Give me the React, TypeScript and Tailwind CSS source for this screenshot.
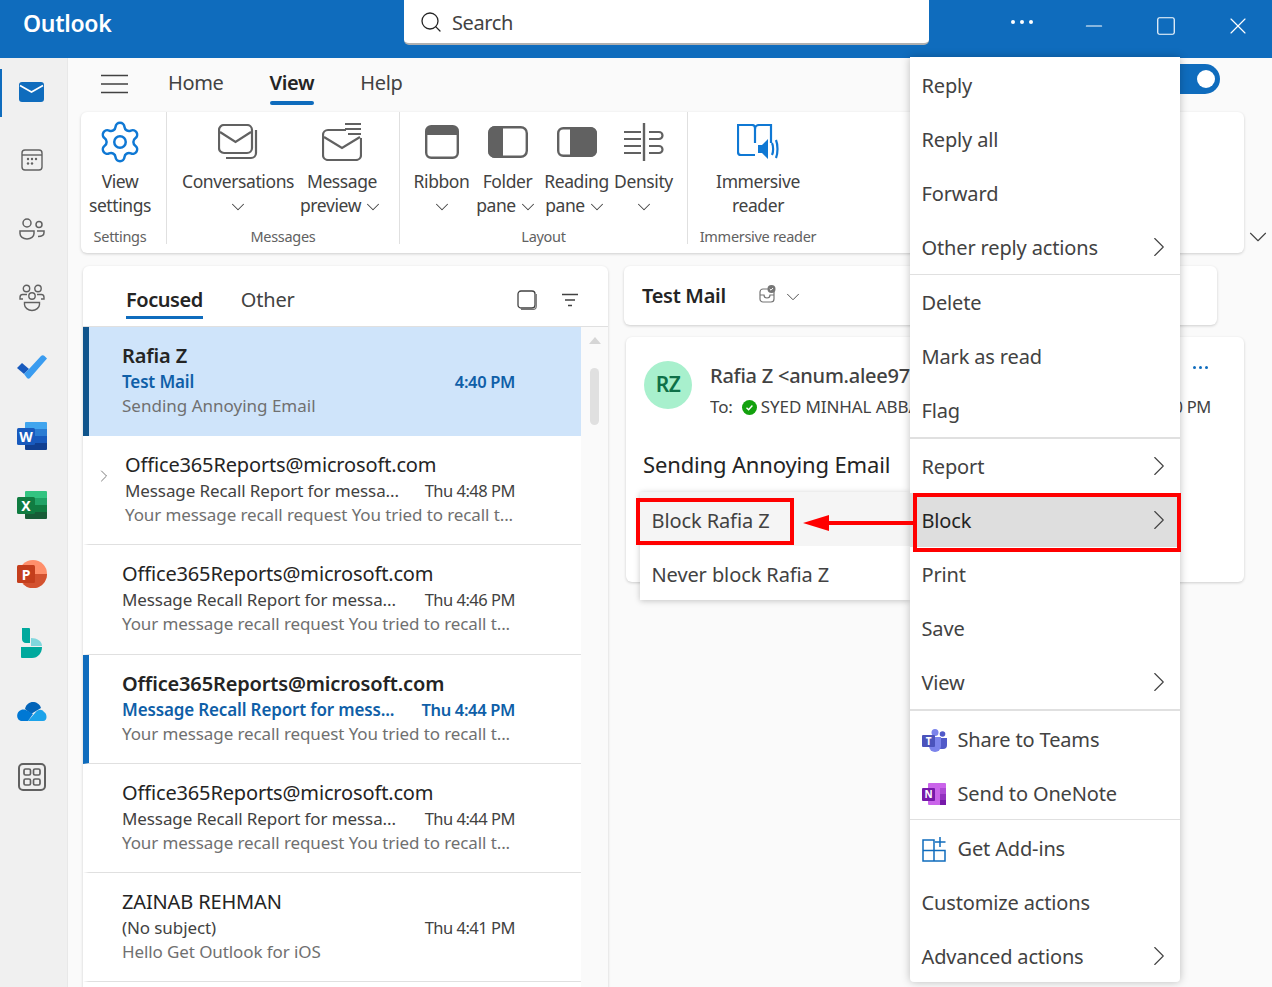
import type { ReactNode } from "react";
import { ChevronDown, ChevronRight, Search, Settings, X, Minus, Square } from "lucide-react";

const font = { fontFamily: '"Noto Sans", sans-serif' };

function RailIcon({ children, active, h = "h-[69px]" }: { children: ReactNode; active?: boolean; h?: string }) {
  return (
    <div className={h + " flex items-center justify-center"}>
      {active && <div className="absolute left-0 top-[69px] h-[48px] w-[2px] bg-[#0f6cbd]" />}
      {children}
    </div>
  );
}

function OfficeTile({ a, b, c, d, tile, letter }: { a: string; b: string; c: string; d: string; tile: string; letter: string }) {
  return (
    <svg width="30" height="28" viewBox="0 0 30 28">
      <path d="M8 1a1 1 0 0 1 1-1h20a1 1 0 0 1 1 1v6H8z" fill={a} />
      <rect x="8" y="7" width="22" height="7" fill={b} />
      <rect x="8" y="14" width="22" height="7" fill={c} />
      <path d="M8 21h22v6a1 1 0 0 1-1 1H9a1 1 0 0 1-1-1z" fill={d} />
      <rect y="6" width="18" height="17" rx="1.5" fill={tile} />
      <text x="9" y="19.5" textAnchor="middle" fontSize="14" fontWeight="700" fill="#fff" fontFamily="Noto Sans">{letter}</text>
    </svg>
  );
}

function Rail() {
  return (
    <div className="w-[68px] shrink-0 bg-[#f0f0f0] border-r border-[#e8e8e8] pr-[3px]">
      <RailIcon active h="h-[67px]">
        <svg width="26" height="20" viewBox="0 0 26 20"><rect width="25" height="20" rx="3" fill="#0f6cbd" /><path d="M1 3.5l11.5 6.5 11.5-6.5" fill="none" stroke="#fff" strokeWidth="1.6" /></svg>
      </RailIcon>
      <RailIcon>
        <svg width="22" height="22" viewBox="0 0 22 22" fill="none" stroke="#616161" strokeWidth="1.4"><rect x="1" y="1" width="20" height="20" rx="3" /><path d="M1 6h20" /><g fill="#616161" stroke="none"><circle cx="7" cy="10" r="1.2" /><circle cx="11" cy="10" r="1.2" /><circle cx="15" cy="10" r="1.2" /><circle cx="7" cy="14.5" r="1.2" /><circle cx="11" cy="14.5" r="1.2" /></g></svg>
      </RailIcon>
      <RailIcon>
        <svg width="28" height="22" viewBox="0 0 28 22" fill="none" stroke="#616161" strokeWidth="1.5"><circle cx="9" cy="5" r="4" /><circle cx="21" cy="6.5" r="3" /><path d="M2 13h14v2.5c0 3-3 5.5-7 5.5s-7-2.5-7-5.5z" /><path d="M19 13h7v1.5c0 2.5-2.5 4-6 4" /></svg>
      </RailIcon>
      <RailIcon>
        <svg width="28" height="28" viewBox="0 0 28 28" fill="none" stroke="#616161" strokeWidth="1.4"><circle cx="8.5" cy="4.5" r="3.2" /><circle cx="20" cy="4.5" r="3.2" /><circle cx="14" cy="12" r="3.2" /><path d="M5 15H2v-1.5C2 12 3 10.5 4.5 10.5H9" /><path d="M23 15h3v-1.5c0-1.5-1-3-2.5-3H19" /><path d="M6.5 18.5h15v2c0 3-3.5 6-7.5 6s-7.5-3-7.5-6z" /></svg>
      </RailIcon>
      <RailIcon>
        <svg width="30" height="24" viewBox="0 0 30 24"><path d="M0 13l5-5 7 6-5 5z" fill="#185abd" /><path d="M7 19l5-5L24 1c1-1 2.5-1 3.5 0L30 3.5 13 23c-1 1-2 1-3 0z" fill="#3a9cf0" /></svg>
      </RailIcon>
      <RailIcon>
        <OfficeTile a="#41a5ee" b="#2b7cd3" c="#185abd" d="#103f91" tile="#185abd" letter="W" />
      </RailIcon>
      <RailIcon>
        <OfficeTile a="#33c481" b="#21a366" c="#107c41" d="#185c37" tile="#107c41" letter="X" />
      </RailIcon>
      <RailIcon>
        <svg width="30" height="28" viewBox="0 0 30 28"><circle cx="16" cy="14" r="14" fill="#ff8f6b" /><path d="M16 14h14a14 14 0 0 1-24 10z" fill="#d35230" /><rect y="5" width="18" height="18" rx="1.5" fill="#c43e1c" /><text x="9" y="19.5" textAnchor="middle" fontSize="14" fontWeight="700" fill="#fff" fontFamily="Noto Sans">P</text></svg>
      </RailIcon>
      <RailIcon>
        <svg width="22" height="30" viewBox="0 0 22 30"><path d="M1 0h7a1 1 0 0 1 1 1v14H5C2.5 15 1 13 1 11z" fill="#00a99d" /><path d="M10 10c6 0 11 3 11 8h-11z" fill="#37c6d0" opacity=".6" /><path d="M0 19h21c0 6-4 11-10 11H1a1 1 0 0 1-1-1z" fill="#00a99d" /></svg>
      </RailIcon>
      <RailIcon>
        <svg width="30" height="19" viewBox="0 0 30 19"><path d="M8 7c2-9 13-9 16-1l-10 6z" fill="#0364b8" /><path d="M11 19H5c-6 0-6.5-9-1-11 3-1 5 0 7 1l5 3z" fill="#0078d4" /><path d="M11 19l7-8c3-4 7-4 9-1 3 1 4 9-1 9z" fill="#1ca3ea" /></svg>
      </RailIcon>
      <RailIcon h="h-[61px]">
        <svg width="28" height="28" viewBox="0 0 28 28" fill="none" stroke="#616161"><rect x="1" y="1" width="26" height="26" rx="4" strokeWidth="2" /><g strokeWidth="1.7"><rect x="6" y="6" width="6.5" height="6" rx="1.5" /><rect x="15.5" y="6" width="6.5" height="6" rx="1.5" /><rect x="6" y="16" width="6.5" height="6" rx="1.5" /><rect x="15.5" y="16" width="6.5" height="6" rx="1.5" /></g></svg>
      </RailIcon>
    </div>
  );
}

function RibbonButton({ icon, lines, chevron, w }: { icon: ReactNode; lines: string[]; chevron?: boolean; w: string }) {
  return (
    <div className={w + " flex flex-col items-center shrink-0"}>
      <div className="h-[50px] flex items-center justify-center">{icon}</div>
      <div className="text-[17.5px] leading-[24px] text-[#424242] whitespace-nowrap text-center mt-[2px] tracking-[-0.4px]">
        <div>{lines[0]}</div>
        <div className="h-[24px] flex items-center justify-center gap-[1px]">
          {lines[1] && <span>{lines[1]}</span>}
          {chevron && <ChevronDown className="mt-[4px]" size={22} strokeWidth={1.1} />}
        </div>
      </div>
    </div>
  );
}

function RibbonGroup({ label, w, pad = "", border, children }: { label: string; w: string; pad?: string; border?: boolean; children: ReactNode }) {
  return (
    <div className={w + " shrink-0 h-[132px] flex flex-col" + (border ? " border-r border-[#e0e0e0]" : "")}>
      <div className={"flex justify-center h-[114px] shrink-0 pt-[5px] " + pad}>{children}</div>
      <div className={"text-[14.5px] leading-[20px] shrink-0 text-[#616161] text-center whitespace-nowrap tracking-[-0.3px] " + (pad === "pr-[7px]" ? pad : "")}>{label}</div>
    </div>
  );
}

function Ribbon() {
  const stroke = "#616161";
  return (
    <div className="ml-[13px] w-[1163px] shrink-0 h-[141px] bg-white rounded-[6px] shadow-[0_1px_3px_rgba(0,0,0,0.18)] flex">
      <RibbonGroup label="Settings" w="w-[86px]" pad="pr-[7px]" border>
        <RibbonButton w="w-[78px]" lines={["View", "settings"]} icon={<Settings size={46} strokeWidth={1.3} color="#0f78d4" />} />
      </RibbonGroup>
      <RibbonGroup label="Messages" w="w-[233px]" pad="pl-[6px]" border>
        <RibbonButton w="w-[112px]" lines={["Conversations", ""]} chevron icon={
          <svg width="40" height="36" viewBox="0 0 40 36" fill="none" stroke={stroke} strokeWidth="2.2"><rect x="1" y="1" width="33" height="28" rx="5" /><path d="M2 8l15.5 10L33 8" /><path d="M38 6v23a5 5 0 0 1-5 5H8" /></svg>
        } />
        <RibbonButton w="w-[96px]" lines={["Message", "preview"]} chevron icon={
          <svg width="40" height="38" viewBox="0 0 40 38" fill="none" stroke={stroke} strokeWidth="2.2"><path d="M24 7H6a5 5 0 0 0-5 5v20a5 5 0 0 0 5 5h28a5 5 0 0 0 5-5V15" /><path d="M2 14l18 11 18-11" /><path d="M23 1h16M23 6h16M26 11h13" /></svg>
        } />
      </RibbonGroup>
      <RibbonGroup label="Layout" w="w-[288px]" border>
        <RibbonButton w="w-[62px]" lines={["Ribbon", ""]} chevron icon={
          <svg width="34" height="34" viewBox="0 0 34 34"><rect x="1.2" y="1.2" width="31.6" height="31.6" rx="5" fill="none" stroke={stroke} strokeWidth="2.4" /><path d="M1 10V6a5 5 0 0 1 5-5h22a5 5 0 0 1 5 5v4z" fill={stroke} /></svg>
        } />
        <RibbonButton w="w-[70px]" lines={["Folder", "pane"]} chevron icon={
          <svg width="40" height="32" viewBox="0 0 40 32"><rect x="1.2" y="1.2" width="37.6" height="29.6" rx="6" fill="none" stroke={stroke} strokeWidth="2.4" /><path d="M15 0H7a7 7 0 0 0-7 7v18a7 7 0 0 0 7 7h8z" fill={stroke} /></svg>
        } />
        <RibbonButton w="w-[68px]" lines={["Reading", "pane"]} chevron icon={
          <svg width="40" height="30" viewBox="0 0 40 30"><rect x="1.2" y="1.2" width="37.6" height="27.6" rx="5" fill="none" stroke={stroke} strokeWidth="2.4" /><path d="M13 0h20a7 7 0 0 1 7 7v16a7 7 0 0 1-7 7H13z" fill={stroke} /></svg>
        } />
        <RibbonButton w="w-[66px]" lines={["Density", ""]} chevron icon={
          <svg width="40" height="38" viewBox="0 0 40 38" fill="none" stroke={stroke} strokeWidth="2.2"><path d="M20 0v38" strokeWidth="2.4" /><path d="M0 9h17M0 16h17M0 23h17M0 30h17" /><path d="M25 9h10a3.5 3.5 0 0 1 0 7h-10" /><path d="M25 23h10a3.5 3.5 0 0 1 0 7h-10" /></svg>
        } />
      </RibbonGroup>
      <RibbonGroup label="Immersive reader" w="w-[140px]">
        <RibbonButton w="w-[130px]" lines={["Immersive", "reader"]} icon={
          <svg width="42" height="36" viewBox="0 0 42 36" fill="none" stroke="#0f78d4" strokeWidth="2.2"><path d="M18 31H4a3 3 0 0 1-3-3V1h14a3 3 0 0 1 3 3v15" /><path d="M18 5c0-2.5 2-4 4-4h12v18" /><path d="M21 21h4l6-6v20l-6-6h-4z" fill="#0f78d4" stroke="none" /><path d="M35 19c1.5 3 1.5 9 0 12M39 16c2 5 2 13 0 18" /></svg>
        } />
      </RibbonGroup>
    </div>
  );
}

type Mail = { from: string; subject: string; time: string; preview: string };

const mails: Mail[] = [
  { from: "Rafia Z", subject: "Test Mail", time: "4:40 PM", preview: "Sending Annoying Email" },
  { from: "Office365Reports@microsoft.com", subject: "Message Recall Report for messa...", time: "Thu 4:48 PM", preview: "Your message recall request You tried to recall t..." },
  { from: "Office365Reports@microsoft.com", subject: "Message Recall Report for messa...", time: "Thu 4:46 PM", preview: "Your message recall request You tried to recall t..." },
  { from: "Office365Reports@microsoft.com", subject: "Message Recall Report for mess...", time: "Thu 4:44 PM", preview: "Your message recall request You tried to recall t..." },
  { from: "Office365Reports@microsoft.com", subject: "Message Recall Report for messa...", time: "Thu 4:44 PM", preview: "Your message recall request You tried to recall t..." },
  { from: "ZAINAB REHMAN", subject: "(No subject)", time: "Thu 4:41 PM", preview: "Hello Get Outlook for iOS" },
];

function MailRow({ mail, index }: { mail: Mail; index: number }) {
  const selected = index === 0;
  const unread = index === 3;
  const rowClass = selected
    ? "bg-[#cfe4fa] border-l-[#0f548c]"
    : unread
      ? "bg-white border-l-[#0f6cbd] border-b border-b-[#e0e0e0]"
      : "bg-white border-l-transparent border-b border-b-[#e0e0e0]";
  return (
    <div className={"h-[109.2px] flex border-l-[6px] pr-[66px] " + rowClass}>
      <div className={index === 1 ? "w-[36px] shrink-0 pl-[5px] pt-[30px]" : "w-[33px] shrink-0"}>
        {index === 1 && <ChevronRight size={20} strokeWidth={1} color="#616161" />}
      </div>
      <div className="flex-1 min-w-0 pt-[16px]">
        <div className={"h-[26px] leading-[26px] text-[20px] text-[#242424] whitespace-nowrap " + (unread || selected ? "font-semibold tracking-[-0.15px]" : "tracking-[-0.15px]")}>{mail.from}</div>
        <div className="h-[26px] leading-[26px] flex justify-between text-[17px] whitespace-nowrap tracking-[-0.1px]">
          <span className={selected || unread ? "font-semibold text-[#0f5fa8] tracking-[-0.15px]" : "text-[#424242]"}>{mail.subject}</span>
          <span className={selected || unread ? "text-[16.5px] tracking-[-0.35px] font-semibold text-[#0f5fa8]" : "text-[16.5px] tracking-[-0.5px] text-[#424242]"}>{mail.time}</span>
        </div>
        <div className={"h-[22px] leading-[22px] text-[17px] text-[#707070] whitespace-nowrap " + (selected ? "tracking-[0px]" : "tracking-[-0.1px]")}>{mail.preview}</div>
      </div>
    </div>
  );
}

function MailList() {
  return (
    <div className="ml-[2px] w-[525px] shrink-0 h-[760px] bg-white rounded-t-[6px] shadow-[0_1px_3px_rgba(0,0,0,0.18)] overflow-hidden flex flex-col">
      <div className="h-[61px] shrink-0 flex items-start border-b border-[#e0e0e0] pl-[43px] pr-[29px]">
        <div className="mt-[20px] text-[20px] leading-[28px] font-semibold text-[#242424] border-b-[3px] border-[#0f6cbd] h-[33px] tracking-[-0.45px]">Focused</div>
        <div className="mt-[20px] ml-[38px] text-[20px] leading-[28px] text-[#424242] tracking-[-0.2px]">Other</div>
        <div className="ml-auto mt-[24px] flex items-center gap-[23px]">
          <svg width="21" height="20" viewBox="0 0 21 20" fill="none" stroke="#424242"><rect x="1" y="1" width="17" height="17" rx="3" strokeWidth="1.3" /><path d="M19.3 4v12a3.5 3.5 0 0 1-3.5 3.5H4" stroke="#757575" strokeWidth="1.2" /></svg>
          <svg width="18" height="14" viewBox="0 0 18 14" fill="none" stroke="#424242" strokeWidth="1.3"><path d="M1 1.5h16M4 7h10M7 12.5h4" /></svg>
        </div>
      </div>
      <div className="flex flex-1 min-h-0">
        <div className="flex-1 min-w-0">
          {mails.map((m, i) => (
            <MailRow key={i} mail={m} index={i} />
          ))}
        </div>
        <div className="w-[27px] shrink-0 bg-[#fafafa] flex flex-col items-center pt-[10px]">
          <div className="w-0 h-0 border-x-[6px] border-x-transparent border-b-[7px] border-b-[#d6d6d6]" />
          <div className="w-[9px] h-[57px] rounded-full bg-[#e0e0e0] mt-[24px]" />
          <div className="mt-auto mb-[4px] w-0 h-0 border-x-[6px] border-x-transparent border-t-[7px] border-t-[#d6d6d6]" />
        </div>
      </div>
    </div>
  );
}

function ReadingPane() {
  return (
    <div className="ml-[16px] w-[621px] shrink-0 flex flex-col">
      <div className="w-[593px] h-[59px] bg-white rounded-[6px] shadow-[0_1px_3px_rgba(0,0,0,0.18)] flex items-center pl-[18px]">
        <span className="text-[20px] font-semibold text-[#242424] tracking-[-0.3px]">Test Mail</span>
        <svg className="ml-[33px] mb-[3px]" width="17" height="18" viewBox="0 0 17 18" fill="none" stroke="#757575" strokeWidth="1.2"><rect x="1" y="4" width="14" height="13" rx="3" /><path d="M1 10h4a3 3 0 0 0 6 0h4" /><circle cx="12.5" cy="4" r="4" fill="#757575" stroke="none" /><path d="M10.8 4l1.2 1.2 2-2.2" stroke="#fff" strokeWidth="1" /></svg>
        <ChevronDown className="ml-[6px] mt-[2px]" size={22} strokeWidth={1} color="#424242" />
      </div>
      <div className="ml-[2px] mt-[12px] w-[618px] h-[245px] bg-white rounded-[6px] shadow-[0_1px_3px_rgba(0,0,0,0.18)] pt-[24px] pl-[18px]">
        <div className="flex items-start">
          <div className="w-[48px] h-[48px] shrink-0 rounded-full bg-[#a8f0cd] flex items-center justify-center text-[21px] font-semibold text-[#0e7048] tracking-[-0.5px]">RZ</div>
          <div className="ml-[18px] w-[200px] shrink-0 overflow-hidden">
            <div className="h-[30px] leading-[30px] text-[20px] font-medium text-[#424242] whitespace-nowrap tracking-[-0.25px]">{"Rafia Z <anum.alee97"}</div>
            <div className="flex items-center h-[32px] text-[17px] text-[#424242] whitespace-nowrap tracking-[-0.1px]">
              <span className="shrink-0">To:</span>
              <svg className="ml-[9px] mr-[4px] shrink-0" width="15" height="15" viewBox="0 0 15 15"><circle cx="7.5" cy="7.5" r="7.5" fill="#13a10e" /><path d="M4.5 7.8l2.1 2 3.8-4.3" fill="none" stroke="#fff" strokeWidth="1.4" /></svg>
              <span className="shrink-0">SYED MINHAL ABBAS</span>
            </div>
          </div>
          <div className="ml-auto mr-[33px] flex flex-col items-end">
            <div className="h-[12px] flex gap-[3px] mr-[3px] items-center">
              <span className="w-[3px] h-[3px] rounded-full bg-[#0f6cbd]" /><span className="w-[3px] h-[3px] rounded-full bg-[#0f6cbd]" /><span className="w-[3px] h-[3px] rounded-full bg-[#0f6cbd]" />
            </div>
            <div className="mt-[23px] w-[31px] overflow-hidden flex justify-end text-[16.5px] leading-[22px] text-[#424242] whitespace-nowrap tracking-[-0.3px]">
              <span className="shrink-0">4:40 PM</span>
            </div>
          </div>
        </div>
        <div className="mt-[26px] ml-[-1px] text-[22px] leading-[30px] text-[#242424] tracking-[-0.15px]">Sending Annoying Email</div>
      </div>
    </div>
  );
}

type Item = { label: string; arrow?: boolean; icon?: ReactNode; active?: boolean };

function MenuItem({ item }: { item: Item }) {
  return (
    <div className={"h-[54px] flex items-center pl-[11.5px] pr-[4px] text-[20px] whitespace-nowrap tracking-[-0.15px] pt-[2px] " + (item.active ? "bg-[#dedede] text-[#242424]" : "text-[#424242]")}>
      {item.icon && <span className="w-[36px] shrink-0 flex items-center">{item.icon}</span>}
      <span>{item.label}</span>
      {item.arrow && <ChevronRight className="ml-auto -mt-[3px]" size={34} strokeWidth={0.8} color="#424242" />}
    </div>
  );
}

const sections: { items: Item[]; cls: string }[] = [
  { cls: "border-b", items: [{ label: "Reply" }, { label: "Reply all" }, { label: "Forward" }, { label: "Other reply actions", arrow: true }] },
  { cls: "border-b-2", items: [{ label: "Delete" }, { label: "Mark as read" }, { label: "Flag" }] },
  { cls: "border-b-2", items: [{ label: "Report", arrow: true }, { label: "Block", arrow: true, active: true }, { label: "Print" }, { label: "Save" }, { label: "View", arrow: true }] },
  {
    cls: "h-[109px] pt-[1px] border-b",
    items: [
      {
        label: "Share to Teams",
        icon: (
          <svg width="25" height="23" viewBox="0 0 25 23">
            <circle cx="20.5" cy="5" r="2.8" fill="#5059c9" />
            <path d="M17 9h8v7a4 4 0 0 1-4 4h-4z" fill="#5059c9" />
            <circle cx="13" cy="3.5" r="3.5" fill="#7b83eb" />
            <path d="M7 8h12v9a6 6 0 0 1-12 0z" fill="#7b83eb" />
            <rect y="6" width="13" height="12" rx="1" fill="#4b53bc" />
            <text x="6.5" y="15.5" textAnchor="middle" fontSize="10" fontWeight="700" fill="#fff" fontFamily="Noto Sans">T</text>
          </svg>
        ),
      },
      {
        label: "Send to OneNote",
        icon: (
          <svg width="24" height="22" viewBox="0 0 24 22">
            <path d="M6 1a1 1 0 0 1 1-1h16a1 1 0 0 1 1 1v20a1 1 0 0 1-1 1H7a1 1 0 0 1-1-1z" fill="#ca64ea" />
            <rect x="18" y="5" width="6" height="6" fill="#ae4bd5" />
            <rect x="18" y="11" width="6" height="6" fill="#9332bf" />
            <rect x="18" y="17" width="6" height="5" fill="#7719aa" />
            <rect y="5" width="13" height="13" rx="1" fill="#7719aa" />
            <text x="6.5" y="15.3" textAnchor="middle" fontSize="10" fontWeight="700" fill="#fff" fontFamily="Noto Sans">N</text>
          </svg>
        ),
      },
    ],
  },
  {
    cls: "pt-[1px]",
    items: [
      {
        label: "Get Add-ins",
        icon: (
          <svg width="24" height="25" viewBox="0 0 24 25" fill="none" stroke="#0f6cbd" strokeWidth="1.5">
            <path d="M1 3h11v21H1zM1 13.5h22V24H12" />
            <path d="M18 0v10M13 5h10.5" />
          </svg>
        ),
      },
      { label: "Customize actions" },
      { label: "Advanced actions", arrow: true },
    ],
  },
];

function MainMenu() {
  return (
    <div className="absolute left-[910px] top-[57px] w-[270px] h-[925px] bg-white rounded-b-[4px] shadow-[0_0_8px_rgba(0,0,0,0.25)] pt-[1px]">
      {sections.map((s, i) => (
        <div key={i} className={s.cls + " border-[#e0e0e0]"}>
          {s.items.map((it) => (
            <MenuItem key={it.label} item={it} />
          ))}
        </div>
      ))}
    </div>
  );
}

function BlockSubmenu() {
  return (
    <div className="absolute left-[640px] top-[492px] w-[270px] h-[108px] bg-white shadow-[0_1px_6px_rgba(0,0,0,0.22)] text-[20px] text-[#424242] tracking-[-0.1px]">
      <div className="h-[54px] bg-[#f5f5f5] flex items-center pl-[11.5px] pt-[4px]">Block Rafia Z</div>
      <div className="h-[54px] flex items-center pl-[11.5px] pt-[4px]">Never block Rafia Z</div>
    </div>
  );
}

export default function App() {
  return (
    <div style={font} className="relative w-[1272px] h-[987px] overflow-hidden bg-[#fafafa]">
      {/* Title bar */}
      <div className="h-[58px] bg-[#0f6cbd] flex items-start text-white">
        <div className="w-[404px] shrink-0 pl-[23px] pt-[6px] text-[23px] leading-[34px] font-semibold tracking-[-0.3px]">Outlook</div>
        <div className="w-[525px] h-[45px] shrink-0 bg-white rounded-b-[5px] border-b-2 border-[#b0b0b0] flex items-center pl-[15px] gap-[9px]">
          <Search size={24} strokeWidth={1.3} color="#242424" />
          <span className="text-[20px] text-[#424242] tracking-[-0.4px] pt-[2px]">Search</span>
        </div>
        <div className="w-[57px] shrink-0" />
        <div className="w-[72px] shrink-0 h-[44px] flex items-center justify-center gap-[5px]">
          <span className="w-[4px] h-[4px] rounded-full bg-white" /><span className="w-[4px] h-[4px] rounded-full bg-white" /><span className="w-[4px] h-[4px] rounded-full bg-white" />
        </div>
        <div className="w-[72px] shrink-0 h-[52px] flex items-center justify-center"><Minus size={26} strokeWidth={1.1} /></div>
        <div className="w-[72px] shrink-0 h-[52px] flex items-center justify-center"><Square size={22} strokeWidth={1.3} /></div>
        <div className="w-[70px] shrink-0 pl-[2px] h-[52px] flex items-center justify-center"><X size={28} strokeWidth={1} /></div>
      </div>

      <div className="flex h-[929px]">
        <Rail />
        <div className="flex-1 min-w-0">
          {/* Nav row */}
          <div className="h-[54px] flex items-start pl-[33px] text-[20px] text-[#424242] tracking-[-0.35px]">
            <svg className="mt-[16px]" width="27" height="20" viewBox="0 0 27 20" stroke="#424242" strokeWidth="1.5"><path d="M0 1.5h27M0 10h27M0 18.5h27" /></svg>
            <span className="ml-[40px] mt-[10px] leading-[30px]">Home</span>
            <div className="ml-[46px] mt-[10px] h-[37px] font-semibold text-[#242424] leading-[30px] relative">
              View
              <div className="absolute left-0 right-0 bottom-0 h-[4px] rounded-full bg-[#0f6cbd]" />
            </div>
            <span className="ml-[46px] mt-[10px] leading-[30px]">Help</span>
            <div className="ml-auto mr-[52px] mt-[6px] w-[70px] h-[30px] rounded-full bg-[#0f6cbd] flex items-center justify-end pr-[5px]">
              <span className="w-[18px] h-[18px] rounded-full bg-white" />
            </div>
          </div>
          <div className="flex items-start">
            <Ribbon />
            <ChevronDown className="-ml-[1px] mt-[110px] shrink-0" size={30} strokeWidth={0.9} color="#424242" />
          </div>
          <div className="flex items-start mt-[13px] ml-[13px]">
            <MailList />
            <ReadingPane />
          </div>
        </div>
      </div>

      <BlockSubmenu />
      <MainMenu />

      {/* Annotation */}
      <div className="absolute left-[636px] top-[498px] w-[158px] h-[47px] border-[4px] border-[#ff0000]" />
      <div className="absolute left-[913px] top-[493px] w-[268px] h-[59px] border-[4px] border-[#ff0000]" />
      <svg className="absolute left-[802px] top-[512px]" width="112" height="22" viewBox="0 0 112 22">
        <path d="M1 11L27 3v6h84v4H27v6z" fill="#ff0000" />
      </svg>
    </div>
  );
}
